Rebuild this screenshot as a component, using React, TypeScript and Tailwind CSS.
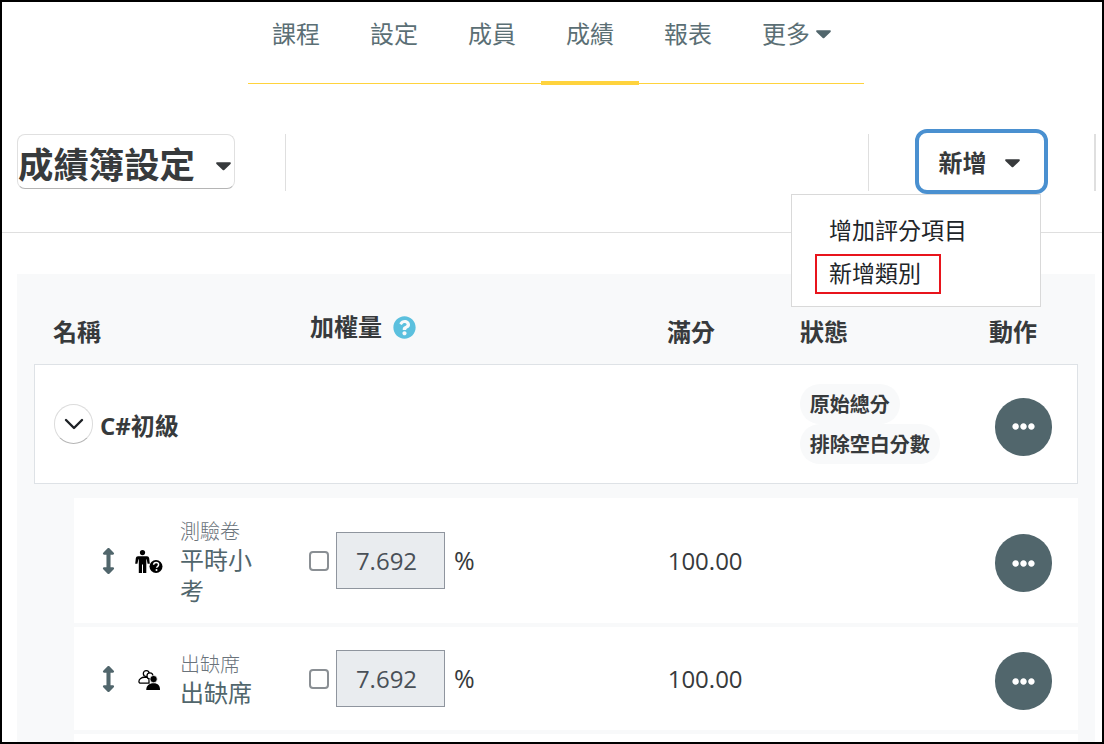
import type { ReactNode } from 'react';
import { ChevronDown } from 'lucide-react';
import { FaArrowsAltV, FaEllipsisH, FaQuestionCircle } from 'react-icons/fa';

function Caret({ className }: { className: string }) {
    return (
        <svg viewBox="0 0 16 9" className={className} fill="currentColor">
            <path d="M1.2 0h13.6c.9 0 1.4 1.1.7 1.8L8.8 8.3c-.4.4-1.2.4-1.6 0L.5 1.8C-.2 1.1.3 0 1.2 0z" />
        </svg>
    );
}

function MoreButton() {
    return (
        <button className="mt-[5px] w-[57px] h-[58px] rounded-full bg-[#51666c] flex items-center justify-center text-white">
            <FaEllipsisH className="w-[23px] h-[23px]" />
        </button>
    );
}

function QuizIcon() {
    return (
        <svg viewBox="0 0 28 23" className="w-[28px] h-[23px]">
            <circle cx="7.5" cy="2.6" r="2.6" fill="#000" />
            <path d="M3 6.2h9c1.2 0 2 .8 2.2 2l.6 5.6h-2.2l-.9-4.6h-.4V23H8v-8.5H7V23H3.8V9.2h-.4l-1 4.6H.2L.8 8.2C1 7 1.8 6.2 3 6.2z" fill="#000" />
            <circle cx="21" cy="16.5" r="6.5" fill="#000" />
            <path d="M18.6 14.8c.1-1.5 1.2-2.3 2.5-2.3 1.4 0 2.5.9 2.5 2.2 0 1.9-2 1.7-2 3.1" fill="none" stroke="#fff" strokeWidth="1.5" />
            <circle cx="21.5" cy="19.9" r="1" fill="#fff" />
        </svg>
    );
}

function GroupIcon() {
    return (
        <svg viewBox="0 0 24 22" className="w-[22px] h-[22px]">
            <circle cx="9" cy="4" r="3.2" fill="#fff" stroke="#000" strokeWidth="1.4" />
            <path d="M1 12.5c0-2.6 3-4.5 6-4.5h5v6.5H3c-1.2 0-2-.8-2-2z" fill="#fff" stroke="#000" strokeWidth="1.4" />
            <circle cx="13" cy="6.5" r="3.2" fill="#fff" stroke="#000" strokeWidth="1.4" />
            <circle cx="17" cy="10" r="4" fill="#000" stroke="#fff" strokeWidth="0.8" />
            <path d="M9 22c0-5 3-7.5 8-7.5s7 2.5 7 7.5z" fill="#000" />
        </svg>
    );
}

function GradeRow({ type, name, icon, height }: { type: string; name: string; icon: ReactNode; height: string }) {
    return (
        <div className={`ml-[40px] bg-white flex items-center ${height}`}>
            <FaArrowsAltV className="ml-[24px] w-[21px] h-[26px] text-[#51666c] mt-[1px]" />
            <div className="w-[28px] ml-[16px] flex justify-center mt-[2px]">{icon}</div>
            <div className="ml-[17px] w-[129px] mt-[3px]">
                <div className="text-[20px] leading-[25px] text-[#6a737b] font-light">{type}</div>
                <div className="text-[24px] leading-[31px] text-[#51666c] w-[72px]">{name}</div>
            </div>
            <span className="w-[20px] h-[20px] border-2 border-[#8a8f94] rounded-[4px] bg-white"></span>
            <div className="ml-[7px] w-[109px] h-[57px] pr-[8px] bg-[#e9ecef] border border-[#8f959e] flex items-center justify-center text-[24px] text-[#495057]">7.692</div>
            <span className="ml-[9px] text-[25px] text-[#373a3c]">%</span>
            <span className="ml-[193px] w-[125px] text-[24px] text-[#373a3c]">100.00</span>
            <div className="ml-auto mr-[26px]">
                <MoreButton />
            </div>
        </div>
    );
}

export default function App() {
    return (
        <div className="relative h-[744px] border-2 border-black bg-white overflow-hidden font-['Open_Sans','Noto_Sans_CJK_TC',sans-serif] text-[#373a3c]">
            <div className="h-[82px] ml-[246px] w-[616px] border-b border-[#ffd33d] flex">
                <div className="flex -ml-px">
                    {['課程', '設定', '成員', '成績', '報表'].map((t, i) => (
                        <div key={t} className={`w-[98px] h-[83px] pt-[14px] text-center text-[24px] leading-[36px] text-[#5b6f75] ${i === 3 ? 'border-b-4 border-[#ffd33d]' : ''}`}>
                            {t}
                        </div>
                    ))}
                </div>
                <div className="pl-[25px] pt-[14px] flex items-start text-[24px] leading-[36px] text-[#5b6f75]">
                    更多
                    <Caret className="w-[15px] h-[9px] mt-[14px] ml-[6px] text-[#51666c]" />
                </div>
            </div>

            <div className="h-[149px] border-b border-[#dfdfdf] flex pl-[15px] pt-[50px]">
                <div className="w-[218px] h-[55px] border border-[#e0e0e0] border-b-[#b5b5b5] rounded-[8px] flex items-center">
                    <span className="text-[35.4px] leading-[44px] font-bold whitespace-nowrap mt-[5px]">成績簿設定</span>
                    <Caret className="w-[15px] h-[9px] ml-[21px] mt-[10px] text-[#373a3c]" />
                </div>
                <div className="ml-[50px] w-px h-[57px] bg-[#dfdfdf]"></div>
                <div className="ml-[582px] w-px h-[57px] bg-[#dfdfdf]"></div>
                <button className="ml-[46px] -mt-[5px] w-[133px] h-[65px] pr-[5px] pt-[3px] border-[4px] border-[#4a90d0] rounded-[12px] flex items-center justify-center">
                    <span className="text-[24px] font-bold leading-[32px]">新增</span>
                    <Caret className="w-[15px] h-[9px] ml-[18px] text-[#373a3c]" />
                </button>
                <div className="ml-[46px] w-[2px] h-[57px] bg-[#dfdfdf]"></div>
            </div>

            <div className="ml-[15px] mt-[41px] w-[1078px] h-[470px] bg-[#f8f9fa] pl-[17px] pr-[17px]">
                <div className="h-[90px] relative flex text-[24px] font-bold">
                    <span className="absolute left-[19px] top-[40px] leading-[36px]">名稱</span>
                    <span className="absolute left-[276px] top-[35px] leading-[36px] flex items-center">
                        加權量
                        <FaQuestionCircle className="ml-[11px] w-[23px] h-[23px] text-[#5bc0de]" />
                    </span>
                    <span className="absolute left-[633px] top-[40px] leading-[36px]">滿分</span>
                    <span className="absolute left-[766px] top-[40px] leading-[36px]">狀態</span>
                    <span className="absolute left-[955px] top-[40px] leading-[36px]">動作</span>
                </div>

                <div className="h-[120px] bg-white border border-[#dee2e6] flex items-center">
                    <span className="ml-[19px] w-[39px] h-[40px] rounded-full border border-[#dcdcdc] border-b-[#b5b5b5] flex items-center justify-center">
                        <ChevronDown className="w-[32px] h-[32px] text-[#1d2125]" strokeWidth={1.8} />
                    </span>
                    <span className="ml-[7px] mt-[4px] text-[24px] font-bold">C#初級</span>
                    <div className="ml-[621px] w-[195px] flex flex-col items-start">
                        <span className="h-[40px] px-[10px] rounded-full bg-[#f8f9fa] text-[20px] font-bold leading-[42px]">原始總分</span>
                        <span className="h-[40px] px-[10px] rounded-full bg-[#f8f9fa] text-[20px] font-bold leading-[42px]">排除空白分數</span>
                    </div>
                    <div className="ml-auto mr-[25px]">
                        <MoreButton />
                    </div>
                </div>

                <div className="mt-[14px] flex flex-col gap-[4px]">
                    <GradeRow type="測驗卷" name="平時小考" icon={<QuizIcon />} height="h-[125px]" />
                    <GradeRow type="出缺席" name="出缺席" icon={<GroupIcon />} height="h-[103px]" />
                    <div className="ml-[40px] h-[30px] bg-white"></div>
                </div>
            </div>

            <div className="absolute left-[789px] top-[192px] w-[250px] h-[113px] bg-white border border-[#d9d9d9] pt-[17px] pl-[37px] text-[23px] text-[#212529]">
                <div className="leading-[36px]">增加評分項目</div>
                <div className="leading-[36px] mt-[7px]">新增類別</div>
                <span className="absolute left-[23px] top-[59px] w-[126px] h-[40px] border-2 border-[#e8141c]"></span>
            </div>
        </div>
    );
}
